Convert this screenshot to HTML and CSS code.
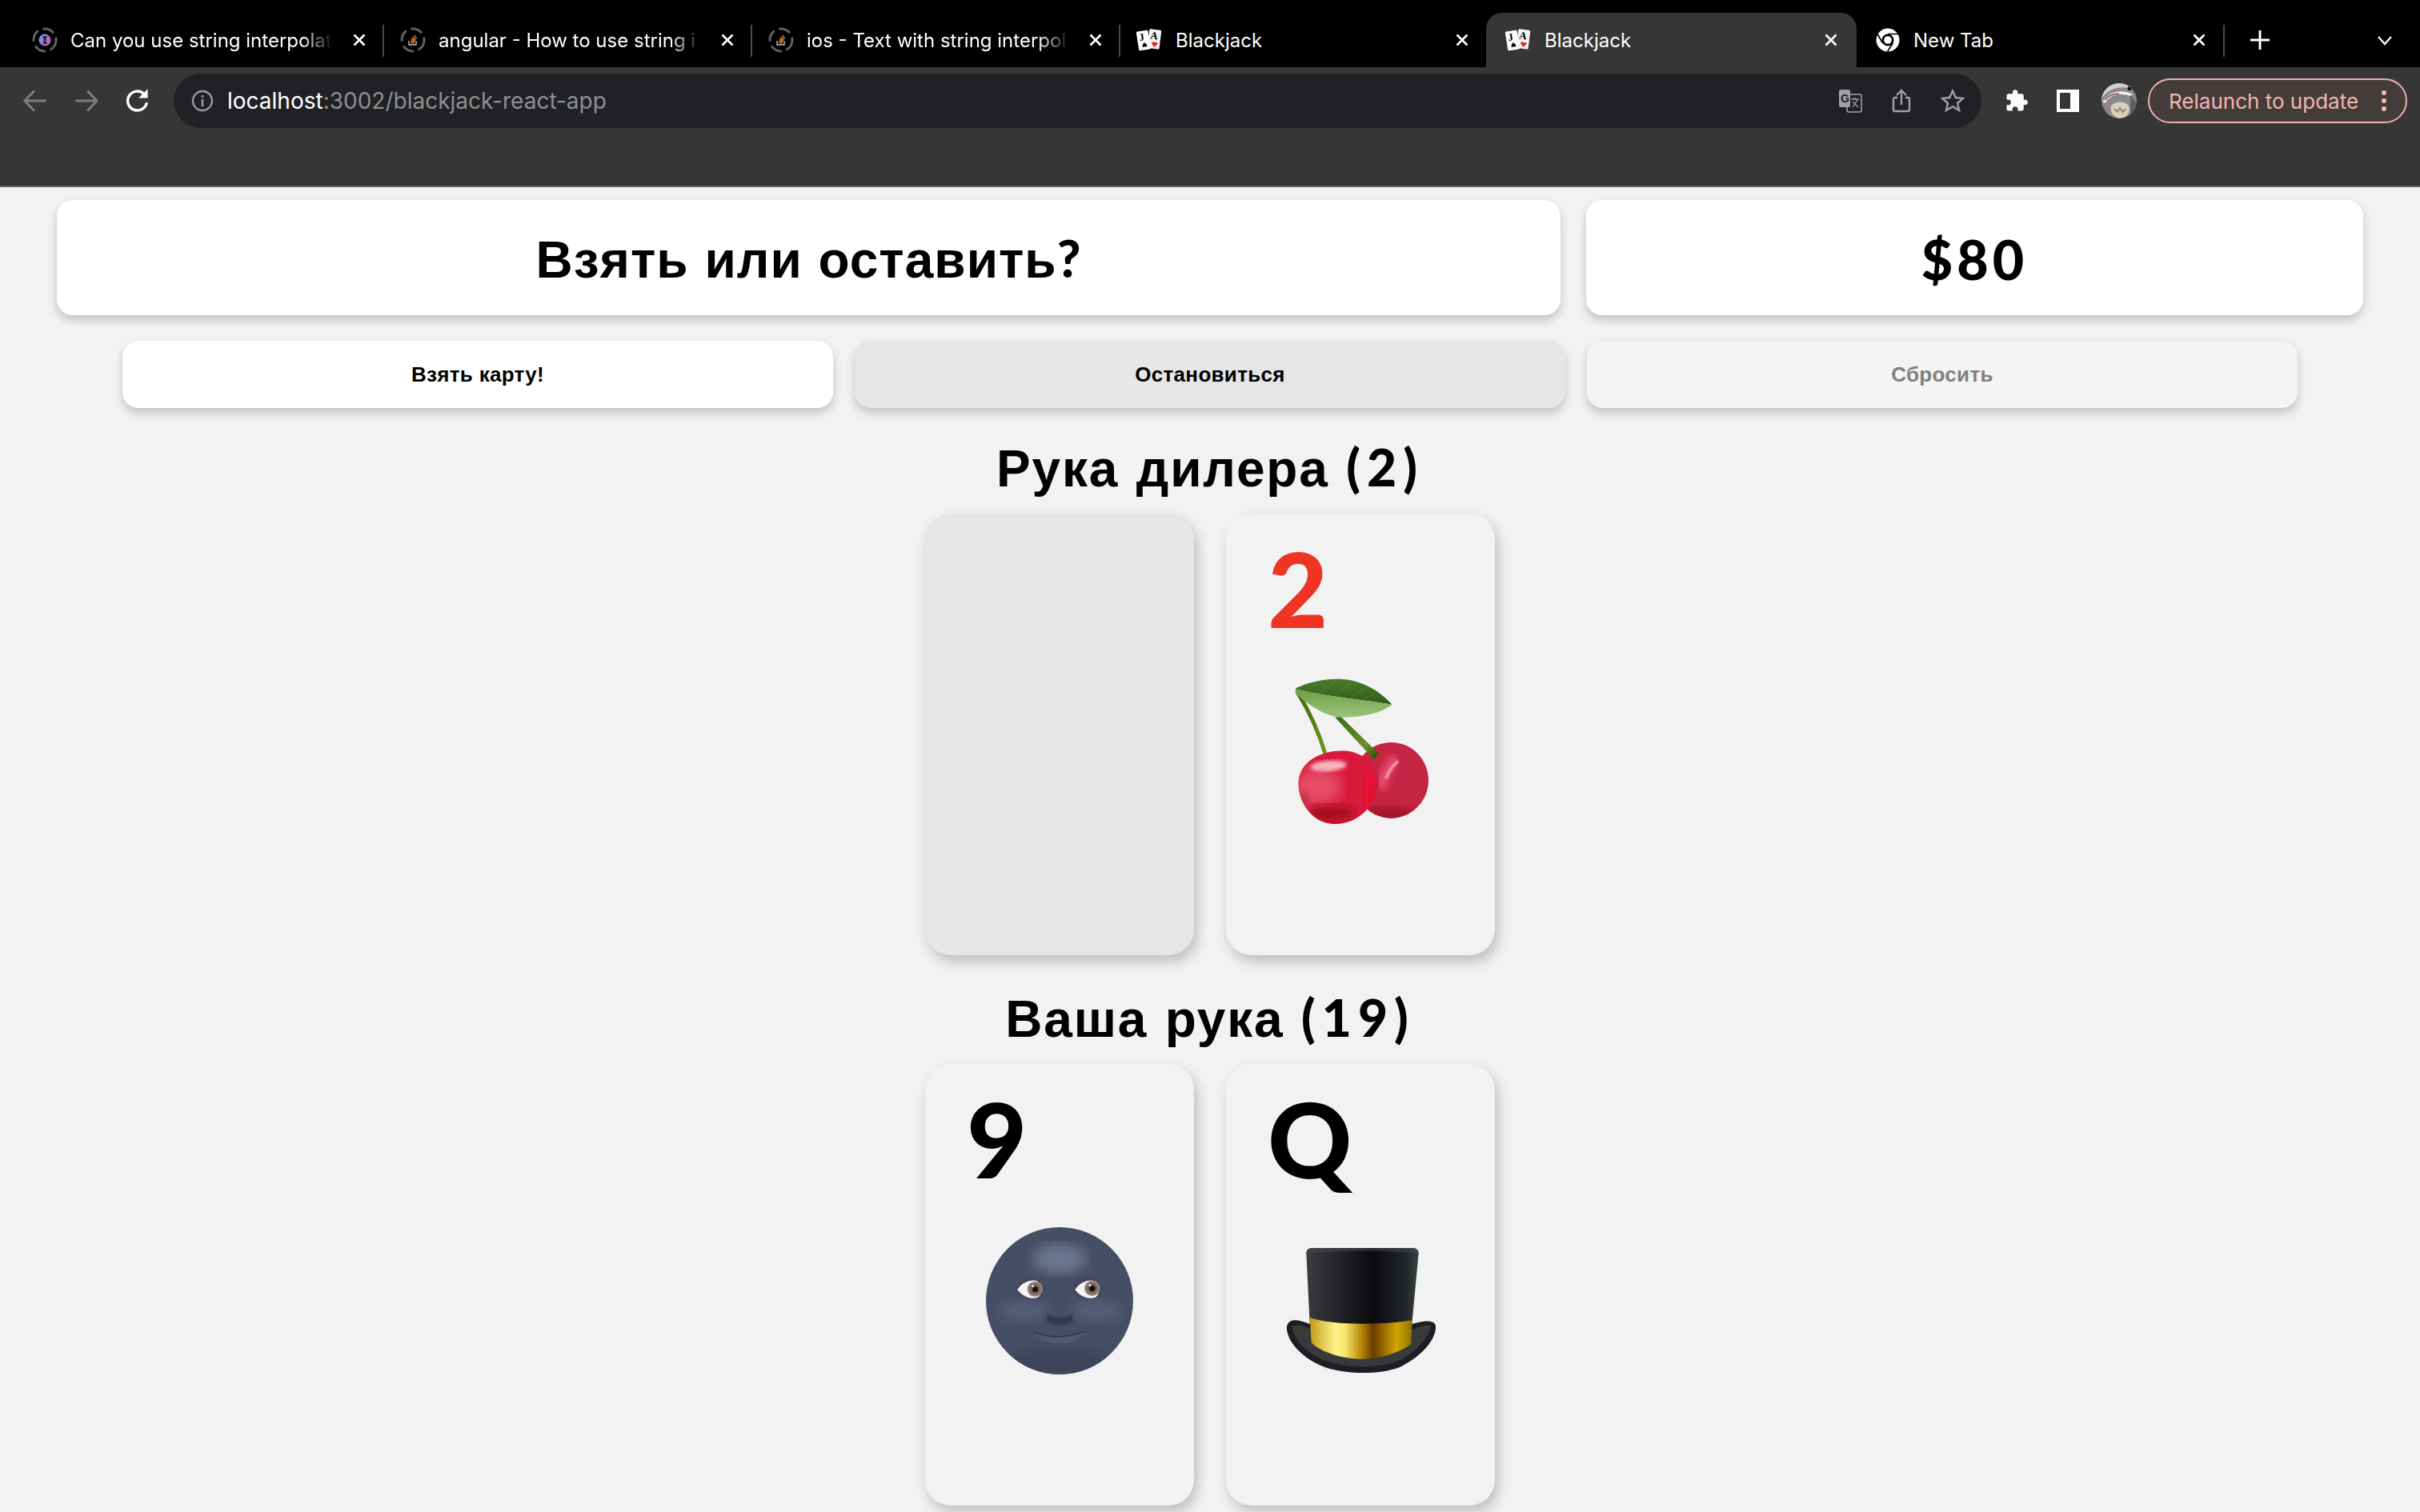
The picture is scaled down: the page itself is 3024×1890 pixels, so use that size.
FILE: index.html
```html
<!DOCTYPE html>
<html lang="ru">
<head>
<meta charset="utf-8">
<title>Blackjack</title>
<link rel="stylesheet" href="styles.css">
</head>
<body>
<svg class="defs" width="0" height="0" aria-hidden="true">
  <defs>
    <symbol id="cards" viewBox="0 0 32 28">
      <g transform="rotate(-9 9 15)"><rect x="1.500" y="2.500" width="15" height="24" rx="1.500" fill="#fff"/><text x="4" y="14.500" class="cardglyph" fill="#000">J</text><path d="M9.500 17c3 3 4 5 1.500 6-1-.3-1-.3-1.500-.8-.5.500-.5.500-1.500.8-2.500-1-1.500-3 1.500-6z" fill="#000"/></g>
      <g transform="rotate(7 23 13)"><rect x="15" y="1" width="15" height="24" rx="1.500" fill="#f4f4f4"/><text x="17" y="13" class="cardglyph" fill="#000">A</text><path d="M23.500 23l-3.500-4c-1-2.500 2.500-3.500 3.500-1.500 1-2 4.500-1 3.500 1.500z" fill="#e5281f"/></g>
    </symbol>
    <symbol id="spinner" viewBox="0 0 32 32">
      <circle cx="16" cy="16" r="14" fill="none" stroke="#5f6063" stroke-width="3" stroke-dasharray="15 6 15 6 15 6 15 6"/>
    </symbol>
    <symbol id="x" viewBox="0 0 18 18">
      <path d="M2.500 2.500l13 13M15.500 2.500l-13 13" stroke="#fff" stroke-width="2.600" fill="none"/>
    </symbol>
    <filter id="b6"><feGaussianBlur stdDeviation="6"/></filter>
    <filter id="b14"><feGaussianBlur stdDeviation="14"/></filter>
    <filter id="b24"><feGaussianBlur stdDeviation="24"/></filter>
    <filter id="b3"><feGaussianBlur stdDeviation="3"/></filter>
  </defs>
</svg>

<header class="chrome">
  <div class="tabstrip">
    <div class="tab tab-w">
      <span class="fav-wrap"><svg class="fav"><use href="#spinner"/></svg><svg class="fav-in" viewBox="0 0 16 16"><defs><linearGradient id="rb" x1="0" y1="0" x2="1" y2="1"><stop offset="0" stop-color="#4fc3f7"/><stop offset=".5" stop-color="#9c6ade"/><stop offset="1" stop-color="#f06292"/></linearGradient></defs><circle cx="8" cy="8" r="7.500" fill="url(#rb)"/><path d="M5 3h6l-2 5 2 5H6l1-5z" fill="#2a2a2a"/></svg></span>
      <span class="tab-title fade">Can you use string interpolat</span>
      <svg class="close"><use href="#x"/></svg>
    </div>
    <div class="tab tab-w">
      <span class="fav-wrap"><svg class="fav"><use href="#spinner"/></svg><svg class="fav-in" viewBox="0 0 16 16"><path d="M3 9v5h9V9" fill="none" stroke="#bcbbbb" stroke-width="1.400"/><path d="M5 11.500h5M5.200 9l5 .8M6 6.500l4.700 2M7.500 4l4 3.200M10 2l2.800 4.500" stroke="#f48024" stroke-width="1.400"/></svg></span>
      <span class="tab-title fade">angular - How to use string i</span>
      <svg class="close"><use href="#x"/></svg>
    </div>
    <div class="tab tab-w">
      <span class="fav-wrap"><svg class="fav"><use href="#spinner"/></svg><svg class="fav-in" viewBox="0 0 16 16"><path d="M3 9v5h9V9" fill="none" stroke="#bcbbbb" stroke-width="1.400"/><path d="M5 11.500h5M5.200 9l5 .8M6 6.500l4.700 2M7.500 4l4 3.200M10 2l2.800 4.500" stroke="#f48024" stroke-width="1.400"/></svg></span>
      <span class="tab-title fade">ios - Text with string interpol</span>
      <svg class="close"><use href="#x"/></svg>
    </div>
    <div class="tab tab-w tab-last">
      <svg class="fav fav-cards"><use href="#cards"/></svg>
      <span class="tab-title">Blackjack</span>
      <svg class="close"><use href="#x"/></svg>
    </div>
    <div class="tab tab-active">
      <svg class="fav fav-cards"><use href="#cards"/></svg>
      <span class="tab-title">Blackjack</span>
      <svg class="close"><use href="#x"/></svg>
    </div>
    <div class="tab tab-new">
      <svg class="fav fav-chrome" viewBox="0 0 28 28"><circle cx="14" cy="14" r="13.500" fill="#fff"/><circle cx="14" cy="14" r="7" fill="#000"/><circle cx="14" cy="14" r="4.500" fill="#fff"/><path d="M14 7h12.500M8 17.500L1.800 7M20 17.500L13.500 27.500" stroke="#000" stroke-width="1.600" fill="none"/></svg>
      <span class="tab-title">New Tab</span>
      <svg class="close"><use href="#x"/></svg>
    </div>
    <svg class="plus" viewBox="0 0 24 24"><path d="M12 0v24M0 12h24" stroke="#fff" stroke-width="3"/></svg>
    <svg class="chev" viewBox="0 0 20 14"><path d="M2 2l8 9 8-9" stroke="#fff" stroke-width="2.200" fill="none"/></svg>
  </div>
  <div class="toolbar">
    <svg class="nav" viewBox="0 0 28 28"><path d="M26 14H3M13 3L2.500 14 13 25" stroke="#7d7e80" stroke-width="2.600" fill="none"/></svg>
    <svg class="nav" viewBox="0 0 28 28"><path d="M2 14h23M15 3l10.500 11L15 25" stroke="#7d7e80" stroke-width="2.600" fill="none"/></svg>
    <svg class="nav" viewBox="0 0 28 28"><path d="M24 16a10.500 10.500 0 1 1-3-9.500" stroke="#fff" stroke-width="3" fill="none"/><path d="M25 1v10H15z" fill="#fff"/></svg>
    <div class="omnibox">
      <svg class="info" viewBox="0 0 28 28"><circle cx="14" cy="14" r="12" stroke="#9a9b9d" stroke-width="2.400" fill="none"/><path d="M14 12v9M14 7v3" stroke="#9a9b9d" stroke-width="2.600"/></svg>
      <span class="url"><span class="url-host">localhost</span>:3002/blackjack-react-app</span>
      <svg class="omni-icon" viewBox="0 0 30 30"><rect x="11" y="7" width="18" height="22" rx="2" fill="#202124" stroke="#a0a1a3" stroke-width="1.600"/><rect x="1" y="1" width="14" height="22" rx="2" fill="#a0a1a3"/><text x="3" y="17" class="glyph-g">G</text><path d="M16 13h10M21 11v3M24 14l-6 9M18 16l7 7" stroke="#a0a1a3" stroke-width="1.300" fill="none"/></svg>
      <svg class="omni-icon" viewBox="0 0 30 30"><path d="M10 11H7a2 2 0 0 0-2 2v13a2 2 0 0 0 2 2h16a2 2 0 0 0 2-2V13a2 2 0 0 0-2-2h-3M15 20V2M9 8l6-6 6 6" stroke="#a0a1a3" stroke-width="2.400" fill="none"/></svg>
      <svg class="omni-icon" viewBox="0 0 30 30"><path d="M15 2.500l3.800 8.500 9.200.9-7 6.100 2.100 9L15 22.200 6.900 27l2.100-9-7-6.100 9.200-.9z" stroke="#a0a1a3" stroke-width="2.400" fill="none"/></svg>
    </div>
    <svg class="tool-icon" viewBox="0 0 24 24"><path d="M20.500 11H19V7a2 2 0 0 0-2-2h-4V3.500a2.500 2.500 0 0 0-5 0V5H4a2 2 0 0 0-2 2v3.800h1.500a2.700 2.700 0 0 1 0 5.400H2V20a2 2 0 0 0 2 2h3.800v-1.500a2.700 2.700 0 0 1 5.400 0V22H17a2 2 0 0 0 2-2v-4h1.500a2.500 2.500 0 0 0 0-5z" fill="#fff"/></svg>
    <svg class="tool-icon" viewBox="0 0 30 30"><path fill-rule="evenodd" d="M1 1h28v28H1zM5 5v20h13V5z" fill="#fff"/></svg>
    <svg class="avatar" viewBox="0 0 44 44"><defs><clipPath id="avc"><circle cx="22" cy="22" r="22"/></clipPath></defs><g clip-path="url(#avc)"><rect width="44" height="44" fill="#8b8a88"/><path d="M0 20C8 6 24 2 44 8V0H0z" fill="#cfcfcf"/><path d="M3 24c6-12 22-15 35-9" stroke="#f0f0f0" stroke-width="3.500" fill="none"/><path d="M4 21c5-6 12-8 18-8" stroke="#8c4a3c" stroke-width="1.500" fill="none"/><path d="M12 28c6-6 16-6 22 0 3 8-2 16-12 16-8-2-12-10-10-16z" fill="#d9d0bb"/><path d="M16 32l4 4 3-5 4 5 3-4" stroke="#8c8577" stroke-width="2" fill="none"/><path d="M36 14l8 12v18h-8z" fill="#5e6062"/><path d="M2 28l8 16H0z" fill="#55575a"/><circle cx="35" cy="6.500" r="2.500" fill="#111"/></g></svg>
    <div class="relaunch"><span>Relaunch to update</span><span class="dots"><i></i><i></i><i></i></span></div>
  </div>
</header>

<main class="page">
  <section class="top-row">
    <h1 class="panel panel-status"><span>Взять или оставить<span class="geo">?</span></span></h1>
    <div class="panel panel-money"><span class="geo">$80</span></div>
  </section>
  <section class="btn-row">
    <button class="btn">Взять карту!</button>
    <button class="btn btn-hover">Остановиться</button>
    <button class="btn btn-off">Сбросить</button>
  </section>

  <h2 class="hand-title">Рука дилера <span class="geo">(2)</span></h2>
  <div class="hand">
    <div class="card card-hidden"></div>
    <div class="card">
      <div class="rank rank-red">2</div>
      <svg class="emoji" viewBox="324 618 552 552" role="img" aria-label="cherries">
        <defs>
          <linearGradient id="st1" x1="0" y1="0" x2="0" y2="1"><stop offset="0" stop-color="#3f6a12"/><stop offset="1" stop-color="#6f9a1f"/></linearGradient>
          <linearGradient id="st2" x1="0" y1="0" x2="1" y2="1"><stop offset="0" stop-color="#3d6a18"/><stop offset=".7" stop-color="#6b8f2a"/><stop offset="1" stop-color="#1f4a05"/></linearGradient>
          <linearGradient id="leafup" x1="0" y1="0" x2="0" y2="1"><stop offset="0" stop-color="#4b7a2c"/><stop offset="1" stop-color="#2f5c18"/></linearGradient>
          <linearGradient id="leafdn" x1="0" y1="0" x2="0" y2="1"><stop offset="0" stop-color="#6f9c48"/><stop offset="1" stop-color="#9cc47a"/></linearGradient>
          <clipPath id="frontc"><path d="M367 1015C370 950 430 895 540 895 620 900 662 960 662 1020 662 1100 590 1170 505 1170 420 1170 367 1090 367 1015z"/></clipPath>
          <clipPath id="backc"><ellipse cx="715" cy="1006" rx="140" ry="142"/></clipPath>
        </defs>
        <path d="M365 678C410 750 445 830 470 912" stroke="url(#st1)" stroke-width="15" fill="none"/>
        <g clip-path="url(#backc)">
          <rect x="560" y="850" width="310" height="310" fill="#c42542"/>
          <ellipse cx="700" cy="1135" rx="110" ry="30" fill="#a1152c" filter="url(#b14)"/>
          <path d="M735 920C700 960 680 1000 675 1040" stroke="#ee4f72" stroke-width="36" fill="none" filter="url(#b14)"/>
          <path d="M742 935C720 950 705 975 695 1000" stroke="#f7a6b6" stroke-width="10" fill="none" filter="url(#b3)"/>
        </g>
        <path d="M505 770L525 766 668 905 650 928z" fill="url(#st2)"/>
        <g clip-path="url(#frontc)">
          <rect x="360" y="890" width="310" height="285" fill="#d9193c"/>
          <ellipse cx="440" cy="1030" rx="90" ry="70" fill="#e64b67" filter="url(#b24)"/>
          <ellipse cx="490" cy="1130" rx="90" ry="32" fill="#a80f24" filter="url(#b14)"/>
          <ellipse cx="640" cy="1050" rx="26" ry="90" fill="#e80f30" filter="url(#b14)"/>
          <ellipse cx="390" cy="1100" rx="20" ry="50" fill="#c0304a" filter="url(#b14)"/>
          <ellipse cx="480" cy="952" rx="68" ry="20" fill="#f7b2bf" filter="url(#b6)" transform="rotate(-4 480 952)"/>
        </g>
        <path d="M355 662C420 632 500 618 570 632 640 648 690 690 718 722 610 704 450 690 358 664z" fill="url(#leafup)"/>
        <path d="M358 664C450 690 610 704 718 722 680 755 600 770 530 770 470 770 400 720 355 678z" fill="url(#leafdn)"/>
        <path d="M400 668l40-28M450 676l60-44M505 686l60-42M565 695l50-34M615 704l40-24M415 690l30 40M480 700l40 50M540 706l60 48M600 712l50 28" stroke="#a9c98c" stroke-width="1.500" opacity=".45" fill="none"/>
      </svg>
    </div>
  </div>

  <h2 class="hand-title hand-title-you">Ваша рука <span class="geo">(19)</span></h2>
  <div class="hand">
    <div class="card">
      <div class="rank">9</div>
      <svg class="emoji" viewBox="276 582 552 552" role="img" aria-label="new moon face">
        <defs>
          <radialGradient id="iris" cx=".5" cy=".5" r=".5"><stop offset="0" stop-color="#3a2c26"/><stop offset=".45" stop-color="#6e5a50"/><stop offset="1" stop-color="#a28f84"/></radialGradient>
          <clipPath id="moonc"><circle cx="552" cy="858" r="276"/></clipPath>
        </defs>
        <g clip-path="url(#moonc)">
          <rect x="276" y="582" width="552" height="552" fill="#464e66"/>
          <ellipse cx="552" cy="700" rx="100" ry="55" fill="#6d7690" filter="url(#b24)"/>
          <ellipse cx="420" cy="895" rx="90" ry="40" fill="#555d77" filter="url(#b24)"/>
          <ellipse cx="690" cy="895" rx="90" ry="40" fill="#555d77" filter="url(#b24)"/>
          <ellipse cx="552" cy="1090" rx="200" ry="60" fill="#3c4359" filter="url(#b24)"/>
          <path d="M552 700V900" stroke="#5b637d" stroke-width="40" filter="url(#b14)"/>
          <path d="M505 770C520 800 515 860 505 905M600 770C584 800 589 860 599 905" stroke="#4a516a" stroke-width="10" fill="none" filter="url(#b6)"/>
        </g>
        <ellipse cx="442" cy="814" rx="50" ry="40" fill="#3d4359" opacity=".55" filter="url(#b3)"/>
        <ellipse cx="656" cy="812" rx="50" ry="40" fill="#3d4359" opacity=".55" filter="url(#b3)"/>
        <path d="M394 816C410 790 440 778 462 782 488 790 492 830 470 845 445 855 410 840 394 816z" fill="#f8f5f0"/>
        <circle cx="460" cy="814" r="29" fill="url(#iris)"/><circle cx="461" cy="815" r="10" fill="#15100e"/><circle cx="452" cy="803" r="4" fill="#fff"/>
        <path d="M610 816C626 790 656 778 678 782 704 790 708 830 686 845 661 855 626 840 610 816z" fill="#f8f5f0"/>
        <circle cx="674" cy="811" r="29" fill="url(#iris)"/><circle cx="675" cy="812" r="10" fill="#15100e"/><circle cx="666" cy="800" r="4" fill="#fff"/>
        <path d="M510 905C495 925 510 945 530 945 545 950 560 950 575 945 600 945 610 925 595 905 590 925 515 925 510 905z" fill="#323950" filter="url(#b3)"/>
        <path d="M458 978C510 1000 590 1000 645 974 620 1015 570 1020 545 1018 510 1018 480 1005 458 978z" fill="#596079" opacity=".6" filter="url(#b3)"/>
        <path d="M458 976C510 998 590 998 645 972" stroke="#2c3248" stroke-width="4" fill="none" stroke-linecap="round"/>
      </svg>
    </div>
    <div class="card">
      <div class="rank">Q</div>
      <svg class="emoji" viewBox="264 582 552 552" role="img" aria-label="top hat">
        <defs>
          <linearGradient id="hat" x1="0" x2="1"><stop offset="0" stop-color="#3a3d40"/><stop offset=".12" stop-color="#2f3134"/><stop offset=".6" stop-color="#0b0b0f"/><stop offset=".9" stop-color="#24282b"/><stop offset="1" stop-color="#3c4245"/></linearGradient>
          <linearGradient id="gold" x1="0" x2="1"><stop offset="0" stop-color="#c29a12"/><stop offset=".25" stop-color="#fdf48c"/><stop offset=".35" stop-color="#f5e36a"/><stop offset=".5" stop-color="#b88a08"/><stop offset=".62" stop-color="#6a3c00"/><stop offset=".85" stop-color="#cfa500"/><stop offset="1" stop-color="#8f6f00"/></linearGradient>
        </defs>
        <path d="M264 955C270 925 300 925 350 945H733C770 935 812 925 822 950 826 1000 775 1060 700 1100 640 1135 480 1140 390 1100 310 1065 260 1000 264 955z" fill="#1d1e25"/>
        <path d="M282 955C300 945 330 950 352 965H733C755 960 780 945 805 952 795 1000 745 1050 690 1080 630 1110 490 1115 400 1080 330 1050 290 1000 282 955z" fill="#39393a"/>
        <path d="M337 680C337 668 345 660 358 660H736C750 660 758 668 758 680L733 945H350z" fill="url(#hat)"/>
        <path d="M337 680C337 668 345 660 358 660H736C750 660 758 668 758 680 640 668 450 668 337 680z" fill="#4a4c50" opacity=".5"/>
        <path d="M350 920C420 950 640 950 734 930L730 1020C690 1050 620 1076 540 1076 470 1076 390 1050 356 1015z" fill="url(#gold)"/>
      </svg>
    </div>
  </div>
</main>
</body>
</html>
```

FILE: styles.css
```css
* { box-sizing: border-box; }
html, body { margin: 0; padding: 0; }
body {
  width: 3024px;
  height: 1890px;
  overflow: hidden;
  background: #f2f2f2;
  font-family: "Liberation Sans", Arial, sans-serif;
  color: #000;
}
.defs { position: absolute; }
.cardglyph { font: 700 13px "Liberation Serif", serif; }
.glyph-g { font: 700 14px "Liberation Sans", sans-serif; fill: #202124; }

/* browser chrome */
.chrome { height: 234px; background: #363636; border-bottom: 2px solid #5d5d5d; }
.tabstrip {
  height: 84px;
  background: #000;
  display: flex;
  align-items: flex-end;
  padding-left: 40px;
  position: relative;
}
.tab {
  height: 68px;
  display: flex;
  align-items: center;
  color: #fff;
  font-family: Inter, "Liberation Sans", sans-serif;
  font-size: 24px;
  position: relative;
}
.tab-w { width: 460px; }
.tab-w::after {
  content: "";
  position: absolute;
  right: 20px;
  top: 15px;
  width: 2px;
  height: 40px;
  background: #4a4a4a;
}
.tab-last { width: 437px; }
.tab-last::after { display: none; }
.tab-active {
  width: 463px;
  background: #363636;
  border-radius: 20px 20px 0 0;
  padding-left: 24px;
}
.tab-new { width: 463px; padding-left: 24px; }
.tab-new::after {
  content: "";
  position: absolute;
  right: 3px;
  top: 15px;
  width: 2px;
  height: 40px;
  background: #4a4a4a;
}
.fav-wrap { width: 32px; height: 32px; position: relative; flex: none; }
.fav { width: 32px; height: 32px; flex: none; display: block; }
.fav-in { position: absolute; left: 8px; top: 8px; width: 16px; height: 16px; }
.fav-chrome { width: 30px; height: 30px; }
.fav-cards { height: 28px; }
.tab-title {
  margin-left: 17px;
  width: 328px;
  white-space: nowrap;
  flex: none;
}
.tab-w:not(.tab-last) .tab-title { margin-left: 16px; }
.fade {
  -webkit-mask-image: linear-gradient(to right, #000 88%, transparent 100%);
  mask-image: linear-gradient(to right, #000 88%, transparent 100%);
}
.close { width: 18px; height: 18px; flex: none; position: absolute; right: 42px; top: 25px; }
.tab-last .close { right: 21px; }
.tab-active .close { right: 23px; }
.tab-new .close { right: 26px; }
.plus { width: 24px; height: 24px; position: absolute; left: 2812px; top: 38px; }
.chev { width: 20px; height: 14px; position: absolute; left: 2970px; top: 44px; }

.toolbar {
  height: 148px;
  display: flex;
  align-items: flex-start;
  padding: 8px 0 0 28px;
}
.nav { width: 32px; height: 32px; margin: 18px 32px 0 0; flex: none; }
.nav:nth-child(3) { margin-right: 29px; }
.omnibox {
  width: 2259px;
  height: 68px;
  background: #202124;
  border-radius: 34px;
  display: flex;
  align-items: center;
  padding: 0 0 0 22px;
  flex: none;
}
.info { width: 28px; height: 28px; flex: none; }
.url {
  margin-left: 17px;
  font-family: Inter, "Liberation Sans", sans-serif;
  font-size: 28px;
  color: #8e8f92;
  flex: 1;
  white-space: nowrap;
}
.url-host { color: #fff; }
.omni-icon { width: 30px; height: 30px; margin-right: 34px; flex: none; }
.omni-icon:last-child { margin-right: 21px; }
.tool-icon { width: 30px; height: 30px; margin: 19px 0 0 0; flex: none; }
.omnibox + .tool-icon { margin-left: 29px; }
.tool-icon + .tool-icon { margin-left: 34px; }
.avatar { width: 44px; height: 44px; margin: 12px 0 0 27px; flex: none; }
.relaunch {
  margin: 6px 0 0 14px;
  width: 324px;
  height: 56px;
  border: 2px solid #eeb0a9;
  border-radius: 28px;
  background: #443c3b;
  color: #f2b6ae;
  font-family: Inter, "Liberation Sans", sans-serif;
  font-size: 26px;
  display: flex;
  align-items: center;
  padding-left: 24px;
  flex: none;
}
.relaunch span:first-child { white-space: nowrap; }
.dots { display: flex; flex-direction: column; gap: 4px; margin-left: auto; margin-right: 24px; }
.dots i { width: 6px; height: 6px; border-radius: 50%; background: #f2b6ae; }

/* page */
.page { display: flex; flex-direction: column; align-items: center; padding-top: 16px; }
.top-row { display: flex; gap: 32px; width: 2882px; }
.geo { font-family: Lato, Inter, sans-serif; font-weight: 900; }
.panel {
  margin: 0;
  height: 144px;
  padding-top: 2px;
  background: #fff;
  border-radius: 20px;
  box-shadow: 0 6px 12px rgba(0, 0, 0, .2);
  display: flex;
  align-items: center;
  justify-content: center;
  font-weight: 700;
  font-size: 64px;
  letter-spacing: 1px;
  word-spacing: 1px;
}
.panel-money .geo { font-size: 68px; letter-spacing: 5px; }
.panel-status { flex: 1879 1 0; }
.panel-money { flex: 971 1 0; }
.btn-row { display: flex; gap: 27px; margin-top: 32px; width: 2718px; }
.btn {
  flex: 1;
  height: 84px;
  border: 0;
  border-radius: 20px;
  background: #fff;
  box-shadow: 0 6px 12px rgba(0, 0, 0, .2);
  font-family: "Liberation Sans", Arial, sans-serif;
  font-weight: 700;
  font-size: 26px;
  letter-spacing: .3px;
  color: #000;
}
.btn-hover { background: #e6e6e6; }
.btn-off { background: #f4f4f4; color: #808080; }
.hand-title {
  margin: 40px 0 0;
  height: 72px;
  line-height: 68px;
  font-weight: 700;
  font-size: 64px;
  letter-spacing: 1.800px;
  word-spacing: 2px;
}
.hand-title .geo { letter-spacing: 8px; }
.hand-title-you { margin-top: 44px; }
.hand { display: flex; gap: 40px; margin-top: 20px; }
.card {
  width: 336px;
  height: 552px;
  background: #f2f2f2;
  border-radius: 32px;
  box-shadow: 4px 8px 16px rgba(0, 0, 0, .22);
  padding: 34px 0 0 52px;
}
.card-hidden { background: #e6e6e6; }
.rank {
  font-family: Lato, Inter, sans-serif;
  font-weight: 900;
  font-size: 130px;
  line-height: 118px;
  height: 118px;
}
.rank-red { color: #ee3524; }
.emoji { display: block; width: 184px; height: 184px; margin: 52px 0 0 24px; overflow: visible; }
```
